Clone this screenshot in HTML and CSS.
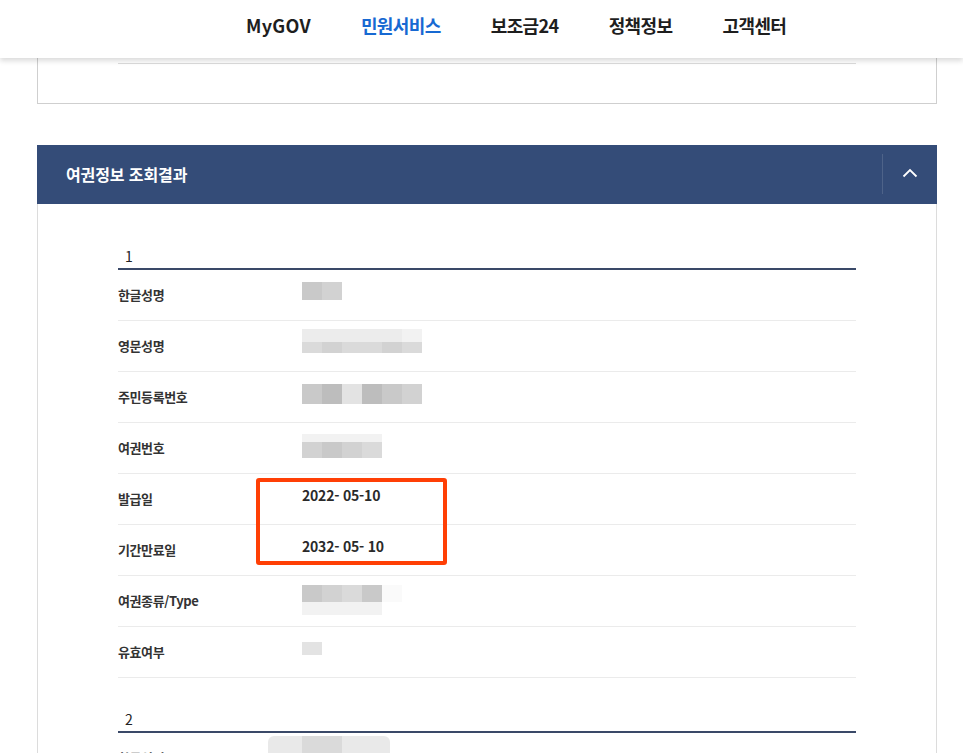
FILE: index.html
```html
<!DOCTYPE html>
<html lang="ko">
<head>
<meta charset="utf-8">
<title>여권정보 조회결과</title>
<link rel="stylesheet" href="styles.css">
</head>
<body>
<header class="gnb">
  <nav class="gnb-nav">
    <a class="gnb-item latin">MyGOV</a>
    <a class="gnb-item active">민원서비스</a>
    <a class="gnb-item">보조금24</a>
    <a class="gnb-item">정책정보</a>
    <a class="gnb-item">고객센터</a>
  </nav>
</header>
<main class="content">
  <div class="card-prev"><div class="prev-line"></div></div>

  <section class="panel">
    <div class="panel-head">
      <h2 class="panel-title">여권정보 조회결과</h2>
      <button class="toggle" type="button" aria-label="접기">
        <svg width="16" height="10" viewBox="0 0 16 10"><polyline points="1.5,8.5 8,2 14.5,8.5" fill="none" stroke="#fff" stroke-width="1.8"/></svg>
      </button>
    </div>
    <div class="panel-body">
      <div class="group">
        <div class="num">1</div>
        <div class="row">
          <div class="label">한글성명</div>
          <div class="val">
            <div class="mz up1"><div class="mz-row h18"><span class="t2"></span><span class="t3"></span></div></div>
          </div>
        </div>
        <div class="row">
          <div class="label">영문성명</div>
          <div class="val">
            <div class="mz up3">
              <div class="mz-row h13"><span class="t6"></span><span class="t6"></span><span class="t6"></span><span class="t6"></span><span class="t6"></span><span class="t7"></span></div>
              <div class="mz-row h11"><span class="t4"></span><span class="t3"></span><span class="t4"></span><span class="t4"></span><span class="t3"></span><span class="t4"></span></div>
            </div>
          </div>
        </div>
        <div class="row">
          <div class="label">주민등록번호</div>
          <div class="val">
            <div class="mz up1"><div class="mz-row h20"><span class="t2"></span><span class="t1"></span><span class="t5"></span><span class="t1"></span><span class="t2"></span><span class="t3"></span></div></div>
          </div>
        </div>
        <div class="row">
          <div class="label">여권번호</div>
          <div class="val">
            <div class="mz">
              <div class="mz-row h8"><span class="t7"></span><span class="t7"></span><span class="t7"></span><span class="t7"></span></div>
              <div class="mz-row h16"><span class="t3"></span><span class="t2"></span><span class="t3"></span><span class="t4"></span></div>
            </div>
          </div>
        </div>
        <div class="row">
          <div class="label">발급일</div>
          <div class="val"><span class="date">2022- 05-10</span></div>
        </div>
        <div class="row">
          <div class="label">기간만료일</div>
          <div class="val"><span class="date">2032- 05- 10</span></div>
        </div>
        <div class="row">
          <div class="label">여권종류/Type</div>
          <div class="val">
            <div class="mz up2">
              <div class="mz-row h17"><span class="t2"></span><span class="t3"></span><span class="t4"></span><span class="t2"></span><span class="t8"></span></div>
              <div class="mz-row h13"><span class="t7"></span><span class="t7"></span><span class="t7"></span><span class="t7"></span></div>
            </div>
          </div>
        </div>
        <div class="row">
          <div class="label">유효여부</div>
          <div class="val">
            <div class="mz down4"><div class="mz-row h13"><span class="t5"></span></div></div>
          </div>
        </div>
      </div>

      <div class="group">
        <div class="num">2</div>
        <div class="row">
          <div class="label">한글성명</div>
          <div class="val">
            <div class="mz-bar"><span class="t4"></span><span class="t4"></span></div>
          </div>
        </div>
        <div class="row">
          <div class="label">영문성명</div>
          <div class="val"></div>
        </div>
      </div>

      <div class="highlight"></div>
    </div>
  </section>
</main>
</body>
</html>
```

FILE: styles.css
```css
* { box-sizing: border-box; }

html, body {
  margin: 0;
  padding: 0;
  background: #fff;
  font-family: "Noto Sans CJK KR", "Noto Sans", sans-serif;
  color: #222;
}

body { overflow: hidden; height: 753px; }

.gnb {
  position: relative;
  z-index: 2;
  height: 58px;
  background: #fff;
  box-shadow: 0 3px 5px rgba(0, 0, 0, 0.14);
}

.gnb-nav {
  display: flex;
  align-items: center;
  gap: 50px;
  height: 58px;
  padding-left: 246px;
  padding-bottom: 8px;
}

.gnb-item {
  font-size: 18px;
  font-weight: 700;
  line-height: 24px;
  letter-spacing: -0.6px;
  color: #1e1e1e;
  text-decoration: none;
}

.gnb-item.latin { letter-spacing: 0.3px; }

.gnb-item.active { color: #1769d2; }

.content {
  margin-left: 37px;
  width: 900px;
}

.card-prev {
  height: 46px;
  padding: 5px 80px 0;
  border: 1px solid #cfcfcf;
  border-top: none;
}

.prev-line {
  height: 1px;
  background: #dcdcdc;
}

.panel { margin-top: 41px; }

.panel-head {
  display: flex;
  align-items: center;
  justify-content: space-between;
  height: 59px;
  padding-left: 29px;
  padding-bottom: 2px;
  background: #344c78;
}

.panel-title {
  margin: 0;
  font-size: 16px;
  font-weight: 700;
  letter-spacing: -0.1px;
  color: #fff;
}

.toggle {
  display: flex;
  align-items: center;
  justify-content: center;
  width: 55px;
  height: 40px;
  padding: 0 0 2px;
  background: transparent;
  border: none;
  border-left: 1px solid rgba(255, 255, 255, 0.13);
}

.panel-body {
  position: relative;
  padding: 42px 80px 0;
  border: 1px solid #dcdcdc;
  border-top: none;
  min-height: 600px;
}

.group + .group { margin-top: 31px; }

.num {
  padding: 0 0 2px 7px;
  font-size: 14px;
  line-height: 20px;
  color: #222;
  border-bottom: 2px solid #3a4968;
}

.row {
  display: flex;
  height: 51px;
  border-bottom: 1px solid #ebebeb;
}

.label {
  display: flex;
  align-items: center;
  width: 184px;
  flex: none;
  padding-bottom: 2px;
  font-size: 13px;
  font-weight: 700;
  letter-spacing: -0.4px;
  color: #333;
}

.val { padding-top: 11px; }

.date {
  display: block;
  font-size: 14px;
  font-weight: 700;
  line-height: 20px;
  letter-spacing: -0.2px;
  color: #2a2a2a;
}

.mz { display: flex; flex-direction: column; }
.mz.up1 { margin-top: 1px; }
.mz.up2 { margin-top: -2px; }
.mz.up3 { margin-top: -3px; }
.mz.down4 { margin-top: 4px; }

.mz-row { display: flex; }
.mz-row span { width: 20px; height: 100%; }

.h8 { height: 8px; }
.h11 { height: 11px; }
.h13 { height: 13px; }
.h16 { height: 16px; }
.h17 { height: 17px; }
.h18 { height: 18px; }
.h20 { height: 20px; }

.t1 { background: #bdbdbd; }
.t2 { background: #c9c9c9; }
.t3 { background: #d2d2d2; }
.t4 { background: #dadada; }
.t5 { background: #e3e3e3; }
.t6 { background: #ececec; }
.t7 { background: #f2f2f2; }
.t8 { background: #fafafa; }

.mz-bar {
  display: flex;
  width: 122px;
  height: 18px;
  margin: -8px 0 0 -34px;
  padding-left: 34px;
  background: #e9e9e9;
  border-radius: 6px 6px 0 0;
}
.mz-bar span { width: 20px; height: 100%; }

.highlight {
  position: absolute;
  left: 218px;
  top: 274px;
  width: 191px;
  height: 87px;
  border: 4px solid #ff3f05;
  border-radius: 3px;
}
```
